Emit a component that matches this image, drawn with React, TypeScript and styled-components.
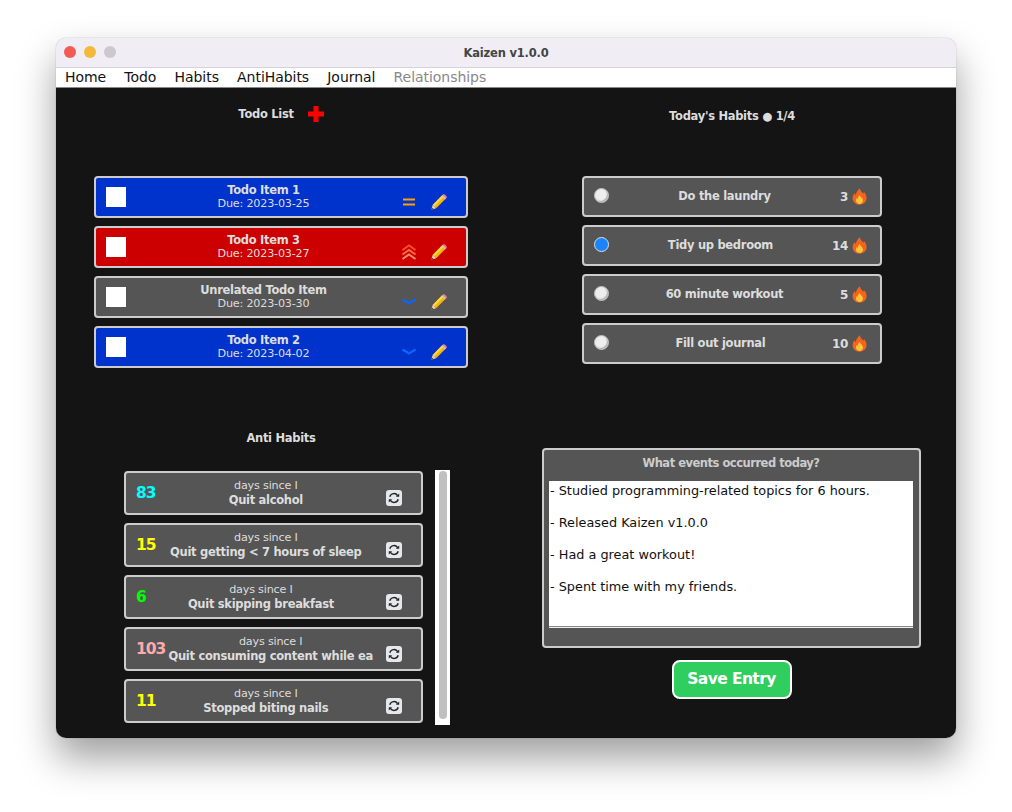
import React from "react";
import styled, { createGlobalStyle } from "styled-components";

const GlobalStyle = createGlobalStyle`
  html, body {
    margin: 0;
    padding: 0;
    background: #fff;
  }
  body {
    font-family: "DejaVu Sans", Verdana, sans-serif;
  }
`;

const Page = styled.div`
  width: 1012px;
  height: 812px;
  padding: 38px 56px 0;
  box-sizing: border-box;
  overflow: hidden;
`;

const Window = styled.div`
  width: 900px;
  height: 700px;
  border-radius: 10px;
  overflow: hidden;
  display: flex;
  flex-direction: column;
  box-shadow: 0 0 1px rgba(0, 0, 0, 0.5), 0 20px 38px rgba(0, 0, 0, 0.38);
`;

const TitleBar = styled.div`
  position: relative;
  flex: 0 0 29px;
  background: #f0eef4;
  display: flex;
  align-items: center;
  justify-content: center;
  font-size: 11.5px;
  letter-spacing: -0.2px;
  font-weight: 700;
  color: #444;
`;

const Lights = styled.div`
  position: absolute;
  left: 8px;
  top: 8px;
  display: flex;
  gap: 8px;
`;

const Light = styled.span<{ $color: string }>`
  width: 12px;
  height: 12px;
  border-radius: 50%;
  background: ${(p) => p.$color};
`;

const MenuBar = styled.div`
  flex: 0 0 21px;
  background: #fff;
  border-top: 1px solid #d4d2d6;
  border-bottom: 1px solid #888;
  box-sizing: border-box;
  display: flex;
  align-items: center;
  gap: 18.2px;
  padding: 0 0 2px 9px;
  font-size: 14px;
  color: #111;
`;

const MenuItem = styled.span<{ $disabled?: boolean }>`
  color: ${(p) => (p.$disabled ? "#888" : "#111")};
  letter-spacing: -0.05px;
`;

const Content = styled.div`
  flex: 1;
  background: #141414;
  display: grid;
  grid-template-columns: 450px 450px;
  grid-template-rows: 336px 314px;
`;

const Panel = styled.section`
  display: flex;
  flex-direction: column;
  align-items: flex-start;
`;

const TodoPanel = styled(Panel)`
  padding: 18px 0 0 38px;
`;

const HabitPanel = styled(Panel)`
  padding: 21px 0 0 76px;
`;

const AntiPanel = styled(Panel)`
  padding: 7px 0 0 68px;
`;

const JournalPanel = styled(Panel)`
  padding: 24px 0 0 36px;
  align-items: center;
  width: 379px;
`;

const Heading = styled.h2`
  margin: 0;
  font-size: 11.5px;
  letter-spacing: -0.3px;
  line-height: 14px;
  font-weight: 700;
  color: #ddd;
  text-align: center;
`;

const TodoHeader = styled.div`
  display: flex;
  align-items: center;
  justify-content: center;
  gap: 14px;
  width: 374px;
  height: 16px;
  margin-bottom: 54px;
`;

const HabitHeader = styled(Heading)`
  width: 300px;
  margin-bottom: 53px;
`;

const AntiHeader = styled(Heading)`
  width: 314px;
  margin-bottom: 26px;
`;

const Stack = styled.div<{ $gap: number }>`
  display: flex;
  flex-direction: column;
  gap: ${(p) => p.$gap}px;
`;

const Card = styled.div`
  box-sizing: border-box;
  display: flex;
  align-items: center;
  border: 2px solid #ccc;
  border-radius: 4px;
  color: #ddd;
  background: #555;
`;

const TodoCard = styled(Card)<{ $bg: string }>`
  width: 374px;
  height: 42px;
  padding: 0 19px 0 10px;
  background: ${(p) => p.$bg};
`;

const CheckBox = styled.span`
  flex: 0 0 20px;
  height: 20px;
  background: #fff;
`;

const TwoLines = styled.div`
  flex: 1;
  min-width: 0;
  text-align: center;
  white-space: nowrap;
  overflow: hidden;
  line-height: 14px;
  font-size: 11.2px;
  letter-spacing: -0.2px;
`;

const Strong = styled.div`
  font-size: 11.5px;
  letter-spacing: -0.3px;
  font-weight: 700;
`;

const TodoIcons = styled.div`
  display: flex;
  align-items: center;
  gap: 14px;
  margin-top: 10px;
`;

const HabitCard = styled(Card)`
  width: 300px;
  height: 41px;
  padding: 0 13px 0 10px;
  font-size: 11.5px;
  letter-spacing: -0.3px;
  font-weight: 700;
`;

const Radio = styled.span<{ $on?: boolean }>`
  flex: 0 0 15px;
  height: 15px;
  box-sizing: border-box;
  border-radius: 50%;
  margin-top: -2px;
  background: ${(p) => (p.$on ? "#1a84ff" : "#eee")};
  border: 1px solid ${(p) => (p.$on ? "#ddd" : "#bbb")};
  box-shadow: ${(p) => (p.$on ? "none" : "inset -1px -1px 1px #aaa")};
`;

const HabitName = styled.span`
  flex: 1;
  text-align: center;
  margin-top: -1px;
`;

const Streak = styled.span`
  display: flex;
  align-items: center;
  gap: 4px;
  font-size: 12px;
`;

const AntiRow = styled.div`
  display: flex;
  align-items: flex-start;
  gap: 12px;
`;

const AntiCard = styled(Card)`
  width: 299px;
  height: 44px;
  padding: 0 19px 0 10px;
`;

const Count = styled.span<{ $color: string }>`
  font-size: 15.5px;
  font-weight: 700;
  letter-spacing: -1px;
  color: ${(p) => p.$color};
`;

const AntiLabel = styled(TwoLines)`
  padding-right: 10px;
`;

const ResetSlot = styled.span`
  display: flex;
  margin-top: 9px;
`;

const ScrollTrack = styled.div`
  width: 15px;
  height: 255px;
  margin-top: -1px;
  box-sizing: border-box;
  background: #fff;
  padding: 1px 3px 6px 4px;
`;

const ScrollThumb = styled.div`
  height: 100%;
  border-radius: 4px;
  background: #c0c0c0;
`;

const JournalCard = styled.div`
  box-sizing: border-box;
  width: 379px;
  height: 200px;
  background: #555;
  border: 2px solid #ccc;
  border-radius: 4px;
  padding: 6px 6px 0 5px;
`;

const JournalTitle = styled(Heading)`
  margin-bottom: 11px;
  letter-spacing: -0.48px;
  color: #ccc;
`;

const JournalText = styled.div`
  box-sizing: border-box;
  height: 146px;
  background: #fff;
  border-bottom: 1px solid #888;
  box-shadow: 0 1px 0 #eee;
  padding-left: 1px;
  color: #111;
  font-size: 12.85px;
  white-space: nowrap;
`;

const JournalLine = styled.div`
  height: 32px;
  line-height: 20px;
`;

const SaveButton = styled.button`
  box-sizing: border-box;
  margin-top: 12px;
  width: 120px;
  height: 39px;
  border: 2px solid #fff;
  border-radius: 8px;
  background: #30cd5f;
  color: #fff;
  font-family: inherit;
  font-size: 15.5px;
  letter-spacing: -0.6px;
  font-weight: 700;
  padding: 0 0 2px;
`;

const Plus = () => (
  <svg width="16" height="16" viewBox="0 0 16 16">
    <path d="M5.500 0h5v5.500H16v5h-5.500V16h-5v-5.500H0v-5h5.500z" fill="#f00" />
  </svg>
);

const Pencil = () => (
  <svg width="16" height="16" viewBox="0 0 16 16">
    <path d="M11 1.600l3.400 3.400-9.300 9.300-3.400-3.400z" fill="#f5b40c" />
    <path d="M11 1.600l1.500 1.500-9.300 9.300-1.500-1.500z" fill="#ffd84a" />
    <path d="M1.700 10.900l3.400 3.400-4.900 1.500z" fill="#f0d3a4" />
    <path d="M.9 13.500l1.600 1.600-2.300.7z" fill="#333" />
    <path d="M12 .6q.9-.7 1.800 0l1.700 1.700q.7.900 0 1.800l-1.100.9-3.400-3.400z" fill="#ef7f8c" />
    <path d="M10.600 2l3.400 3.400.9-.9-3.400-3.400z" fill="#c9c9c9" />
  </svg>
);

const Priority = ({ level, color }: { level: string; color: string }) => (
  <svg width="16" height="16" viewBox="0 0 16 16" fill="none" stroke={color}>
    {level === "medium" && <path d="M2 5.500h12M2 10.500h12" strokeWidth="2" />}
    {level === "low" && <path d="M1.500 5.500L8 9.500l6.500-4" strokeWidth="2.200" />}
    {level === "high" && (
      <>
        <path d="M1.500 6l6.500-4.500L14.500 6" strokeWidth="2" />
        <path d="M1.500 10.500L8 6l6.500 4.500" strokeWidth="2" stroke="#ff6a4a" />
        <path d="M1.500 15L8 10.500l6.500 4.500" strokeWidth="2" stroke="#ff8a6c" />
      </>
    )}
  </svg>
);

const Flame = () => (
  <svg width="15" height="17" viewBox="0 0 15 17">
    <path
      d="M7.800.300c.6 2.800 2.200 3.800 3.500 5.500.4-.5.600-1.200.6-1.900 1.700 1.700 2.700 3.900 2.700 6.200 0 3.800-2.900 6.600-7 6.600S.6 13.900.6 10.300c0-2.300 1.100-3.800 2.300-5.200.1 1 .4 1.700 1 2.200C4 4.700 5.600 2 7.800.300z"
      fill="#f4641e"
    />
    <path
      d="M7.800 7c.3 1.500 1.400 2 2.300 3.200.9 1.200 1 2.300.7 3.400-.4 1.400-1.700 2.400-3.300 2.400-1.800 0-3.300-1.200-3.500-2.900-.2-1.300.3-2.300 1-3 .1.500.3.900.6 1.200C5.700 9.700 6.500 8 7.800 7z"
      fill="#ffc53a"
    />
  </svg>
);

const Reset = () => (
  <svg width="16" height="16" viewBox="0 0 16 16">
    <rect width="16" height="16" rx="3" fill="#e6e8ee" />
    <g fill="none" stroke="#222" strokeWidth="1.400">
      <path d="M3.800 6.800A4.300 4.300 0 0 1 11.600 5.600" />
      <path d="M12.200 9.200A4.300 4.300 0 0 1 4.400 10.400" />
    </g>
    <path d="M9.900 6.800h3.300V3.500zM6.100 9.200H2.800v3.300z" fill="#222" />
  </svg>
);

const todos = [
  { title: "Todo Item 1", due: "2023-03-25", bg: "#0033cc", level: "medium", color: "#ffa200" },
  { title: "Todo Item 3", due: "2023-03-27", bg: "#cc0000", level: "high", color: "#ff4a26" },
  { title: "Unrelated Todo Item", due: "2023-03-30", bg: "#555555", level: "low", color: "#0a66ff" },
  { title: "Todo Item 2", due: "2023-04-02", bg: "#0033cc", level: "low", color: "#0a66ff" },
];

const habits = [
  { name: "Do the laundry", streak: 3 },
  { name: "Tidy up bedroom", streak: 14, done: true },
  { name: "60 minute workout", streak: 5 },
  { name: "Fill out journal", streak: 10 },
];

const antiHabits = [
  { days: 83, color: "#00ffff", name: "Quit alcohol" },
  { days: 15, color: "#ffff00", name: "Quit getting < 7 hours of sleep" },
  { days: 6, color: "#00ff00", name: "Quit skipping breakfast" },
  { days: 103, color: "#ffaaaa", name: "Quit consuming content while ea" },
  { days: 11, color: "#ffff00", name: "Stopped biting nails" },
];

const journal = [
  "- Studied programming-related topics for 6 hours.",
  "- Released Kaizen v1.0.0",
  "- Had a great workout!",
  "- Spent time with my friends.",
];

const menu = ["Home", "Todo", "Habits", "AntiHabits", "Journal"];

const App: React.FunctionComponent = () => (
  <Page>
    <GlobalStyle />
    <Window>
      <TitleBar>
        <Lights>
          <Light $color="#f25a54" />
          <Light $color="#f5b93a" />
          <Light $color="#cbc9cf" />
        </Lights>
        Kaizen v1.0.0
      </TitleBar>
      <MenuBar>
        {menu.map((item) => (
          <MenuItem key={item}>{item}</MenuItem>
        ))}
        <MenuItem $disabled>Relationships</MenuItem>
      </MenuBar>
      <Content>
        <TodoPanel>
          <TodoHeader>
            <Heading>Todo List</Heading>
            <Plus />
          </TodoHeader>
          <Stack $gap={8}>
            {todos.map((todo) => (
              <TodoCard key={todo.title} $bg={todo.bg}>
                <CheckBox />
                <TwoLines>
                  <Strong>{todo.title}</Strong>
                  Due: {todo.due}
                </TwoLines>
                <TodoIcons>
                  <Priority level={todo.level} color={todo.color} />
                  <Pencil />
                </TodoIcons>
              </TodoCard>
            ))}
          </Stack>
        </TodoPanel>
        <HabitPanel>
          <HabitHeader>Today's Habits ● 1/4</HabitHeader>
          <Stack $gap={8}>
            {habits.map((habit) => (
              <HabitCard key={habit.name}>
                <Radio $on={habit.done} />
                <HabitName>{habit.name}</HabitName>
                <Streak>
                  {habit.streak}
                  <Flame />
                </Streak>
              </HabitCard>
            ))}
          </Stack>
        </HabitPanel>
        <AntiPanel>
          <AntiHeader>Anti Habits</AntiHeader>
          <AntiRow>
            <Stack $gap={8}>
              {antiHabits.map((anti) => (
                <AntiCard key={anti.name}>
                  <Count $color={anti.color}>{anti.days}</Count>
                  <AntiLabel>
                    days since I
                    <Strong>{anti.name}</Strong>
                  </AntiLabel>
                  <ResetSlot>
                    <Reset />
                  </ResetSlot>
                </AntiCard>
              ))}
            </Stack>
            <ScrollTrack>
              <ScrollThumb />
            </ScrollTrack>
          </AntiRow>
        </AntiPanel>
        <JournalPanel>
          <JournalCard>
            <JournalTitle>What events occurred today?</JournalTitle>
            <JournalText>
              {journal.map((line) => (
                <JournalLine key={line}>{line}</JournalLine>
              ))}
            </JournalText>
          </JournalCard>
          <SaveButton>Save Entry</SaveButton>
        </JournalPanel>
      </Content>
    </Window>
  </Page>
);

export default App;
